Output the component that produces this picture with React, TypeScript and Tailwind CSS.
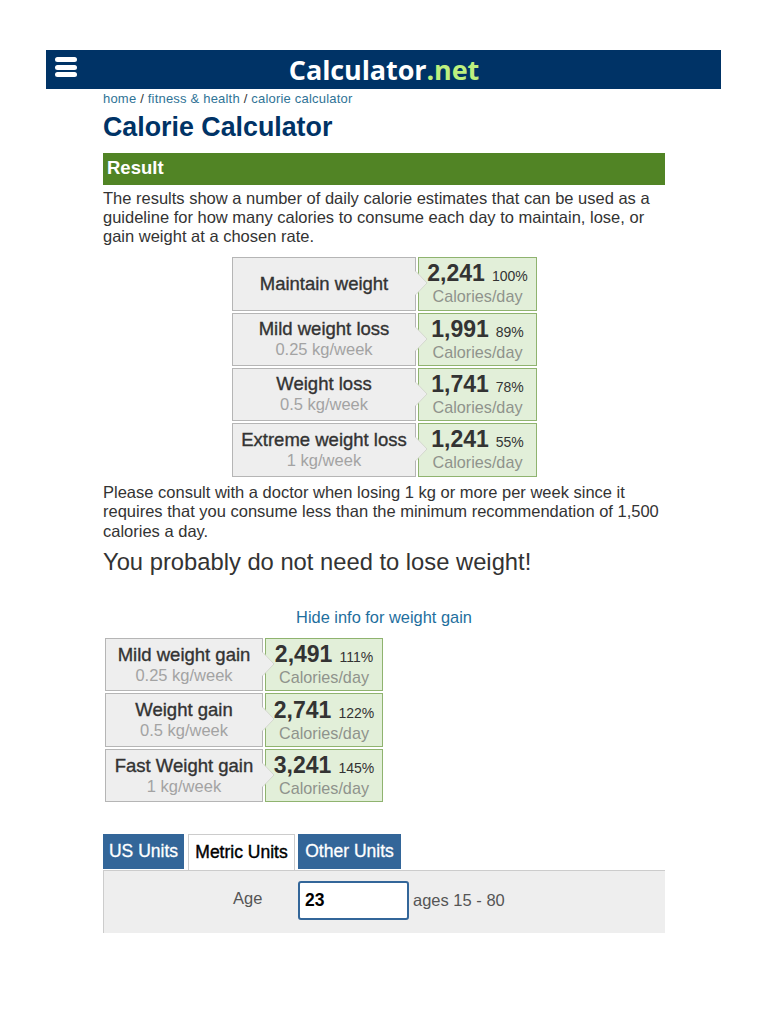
import React from "react";

const lossRows = [
  { title: "Maintain weight", sub: "", value: "2,241", pct: "100%", h: "h-[54px]" },
  { title: "Mild weight loss", sub: "0.25 kg/week", value: "1,991", pct: "89%", h: "h-[53px]" },
  { title: "Weight loss", sub: "0.5 kg/week", value: "1,741", pct: "78%", h: "h-[53px]" },
  { title: "Extreme weight loss", sub: "1 kg/week", value: "1,241", pct: "55%", h: "h-[54px]" },
];

const gainRows = [
  { title: "Mild weight gain", sub: "0.25 kg/week", value: "2,491", pct: "111%", h: "h-[53px]" },
  { title: "Weight gain", sub: "0.5 kg/week", value: "2,741", pct: "122%", h: "h-[54px]" },
  { title: "Fast Weight gain", sub: "1 kg/week", value: "3,241", pct: "145%", h: "h-[53px]" },
];

type Row = (typeof lossRows)[number];

const ResultRow = ({ row, leftW, rightW }: { row: Row; leftW: string; rightW: string }) => (
  <div className={`flex gap-[2px] ${row.h}`}>
    <div
      className={`relative flex flex-col items-center justify-center border border-[#b5b5b5] bg-[#eeeeee] ${leftW}`}
    >
      <div className="text-[18.5px] leading-[20px] text-[#333333] [-webkit-text-stroke:0.35px_#333333]">
        {row.title}
      </div>
      {row.sub && <div className="text-[16.5px] leading-[20px] text-[#a3a3a3]">{row.sub}</div>}
      <svg
        className="absolute top-[13px] right-[-13px] z-10"
        width="13"
        height="24"
        viewBox="0 0 13 24"
      >
        <path d="M0 0.5 L1 0.5 L12 12 L1 23.5 L0 23.5 Z" fill="#eeeeee" />
        <path d="M1 0.5 L12 12 L1 23.5" fill="none" stroke="#d4d8ce" strokeWidth="1" />
      </svg>
    </div>
    <div
      className={`flex flex-col items-center justify-center border border-[#8fb36f] bg-[#e2efd9] ${rightW}`}
    >
      <div className="flex items-baseline gap-[7px] leading-[22px]">
        <span className="text-[23px] font-bold text-[#333333]">{row.value}</span>
        <span className="text-[14px] text-[#333333]">{row.pct}</span>
      </div>
      <div className="text-[16.2px] leading-[18px] text-[#8f938c]">Calories/day</div>
    </div>
  </div>
);

const App = () => {
  return (
    <div className="min-h-[1024px] bg-white font-['Liberation_Sans',Arial,sans-serif] text-[16.5px] text-[#333333]">
      <div className="ml-[46px] w-[675px] pt-[50px]">
        {/* top bar */}
        <header className="relative flex h-[39px] items-center justify-center bg-[#003366]">
          <div className="absolute top-[7px] left-[9px] flex flex-col gap-[2.5px]">
            <div className="h-[5px] w-[22px] rounded-full bg-white" />
            <div className="h-[5px] w-[22px] rounded-full bg-white" />
            <div className="h-[5px] w-[22px] rounded-full bg-white" />
          </div>
          <div className="ml-[1px] font-['Open_Sans','Liberation_Sans',sans-serif] text-[27px] leading-[39px] font-bold tracking-[-0.1px] text-white">
            Calculator<span className="text-[#bdf07f]">.net</span>
          </div>
        </header>

        <main className="ml-[57px] w-[562px]">
          <div className="pt-[2px] text-[13px] leading-[15px] tracking-[0.2px] text-[#2f7396]">
            home <span className="text-[#333333]">/</span> fitness &amp; health{" "}
            <span className="text-[#333333]">/</span> calorie calculator
          </div>
          <h1 className="mt-[6px] text-[26.8px] leading-[30px] font-bold text-[#003366]">
            Calorie Calculator
          </h1>
          <div className="mt-[11px] h-[32px] bg-[#518425] pl-[4px] text-[18.5px] leading-[30px] font-bold text-white">
            Result
          </div>
          <p className="mt-[4px] leading-[19px]">
            The results show a number of daily calorie estimates that can be used as a guideline for
            how many calories to consume each day to maintain, lose, or gain weight at a chosen rate.
          </p>

          <div className="mt-[10.5px] ml-[129px] flex flex-col gap-[2px]">
            {lossRows.map((row) => (
              <ResultRow key={row.title} row={row} leftW="w-[184px]" rightW="w-[119px]" />
            ))}
          </div>

          <p className="mt-[6px] leading-[19.5px]">
            Please consult with a doctor when losing 1 kg or more per week since it requires that you
            consume less than the minimum recommendation of 1,500 calories a day.
          </p>
          <div className="mt-[7px] text-[23.75px] leading-[28px] text-[#333333]">
            You probably do not need to lose weight!
          </div>

          <div className="mt-[31px] text-center text-[16.4px] leading-[20px] text-[#1f6f9e]">
            Hide info for weight gain
          </div>

          <div className="mt-[11px] ml-[2px] flex flex-col gap-[2px]">
            {gainRows.map((row) => (
              <ResultRow key={row.title} row={row} leftW="w-[158px]" rightW="w-[118px]" />
            ))}
          </div>

          <div className="mt-[32px] flex gap-[3px]">
            <div className="flex h-[35px] w-[81px] items-center justify-center bg-[#336699] text-[17.5px] text-white [-webkit-text-stroke:0.3px_#ffffff]">
              US Units
            </div>
            <div className="relative z-10 ml-[1px] flex h-[36px] w-[107px] items-center justify-center border border-b-0 border-[#cccccc] bg-white text-[17.5px] text-black [-webkit-text-stroke:0.4px_#000000]">
              Metric Units
            </div>
            <div className="flex h-[35px] w-[103px] items-center justify-center bg-[#336699] text-[17.5px] text-white [-webkit-text-stroke:0.3px_#ffffff]">
              Other Units
            </div>
          </div>
          <div className="flex h-[63px] border-t border-l border-[#cccccc] bg-[#eeeeee] pt-[10px]">
            <div className="w-[129px]" />
            <div className="w-[65px] pt-[7px] leading-[20px] text-[#555555]">Age</div>
            <div className="flex h-[39px] w-[111px] items-center rounded-[3px] border-2 border-[#336699] bg-white pl-[5px] text-[17.5px] font-bold text-black">
              23
            </div>
            <div className="ml-[4px] pt-[9px] leading-[20px] text-[#555555]">ages 15 - 80</div>
          </div>
        </main>
      </div>
    </div>
  );
};

export default App;
